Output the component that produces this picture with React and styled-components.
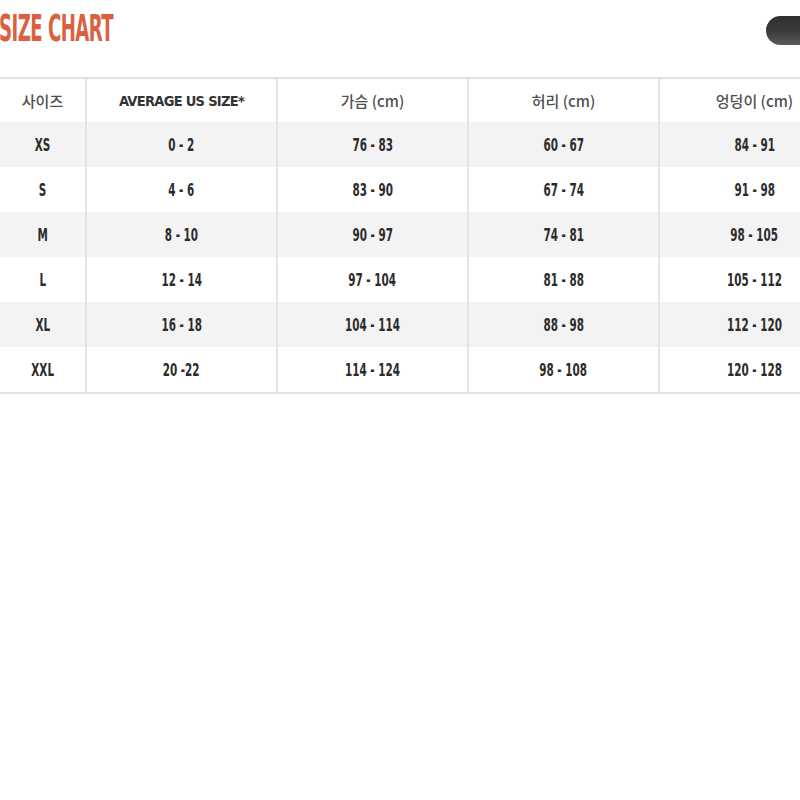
import React from 'react'
import styled, { createGlobalStyle } from 'styled-components';

const Global = createGlobalStyle`
html, body {
  margin: 0;
  padding: 0;
  background: #fff;
  overflow: hidden;
}
`;

const Page = styled.div`
width: 800px;
height: 800px;
overflow: hidden;
background: #fff;
`;

const TopBar = styled.div`
display: flex;
justify-content: space-between;
align-items: flex-start;
height: 77px;
`;

const Title = styled.h1`
margin: 8px 0 0 -1px;
font-family: "DejaVu Sans Condensed", "DejaVu Sans", sans-serif;
font-weight: bold;
font-size: 38px;
line-height: 40px;
color: #d8623f;
letter-spacing: -1px;
transform: scaleX(0.53);
transform-origin: left center;
white-space: nowrap;
`;

const Pill = styled.div`
margin-top: 16px;
width: 34px;
height: 29px;
border-radius: 15px 0 0 15px;
background: linear-gradient(180deg, #2e2e2e 0%, #3c3c3c 55%, #5a5a5a 100%);
`;

const Table = styled.div`
display: grid;
grid-template-columns: 85px 191px 191px 191px 191px;
width: 849px;
border-top: 2px solid #e2e2e2;
border-bottom: 2px solid #e2e2e2;
`;

const Row = styled.div`
display: contents;
`;

const Cell = styled.div`
height: ${p => p.$head ? 43 : 45}px;
display: flex;
align-items: center;
justify-content: center;
background: ${p => p.$shade ? '#f3f3f3' : '#fff'};
border-left: ${p => p.$first ? 'none' : '2px solid #e4e4e4'};
`;

const Num = styled.span`
display: inline-block;
font-family: "DejaVu Sans Condensed", "DejaVu Sans", sans-serif;
font-weight: bold;
font-size: 17px;
color: #2b2b2b;
transform: scaleX(0.68);
white-space: nowrap;
`;

const HeadKo = styled.span`
font-family: "Noto Sans CJK KR", "Noto Sans", sans-serif;
font-weight: 500;
font-size: 15px;
color: #505050;
white-space: nowrap;
`;

const HeadEn = styled.span`
display: inline-block;
font-family: "DejaVu Sans Condensed", "DejaVu Sans", sans-serif;
font-weight: bold;
font-size: 14.5px;
letter-spacing: -0.7px;
color: #333;
white-space: nowrap;
`;

const heads = ['사이즈', 'AVERAGE US SIZE*', '가슴 (cm)', '허리 (cm)', '엉덩이 (cm)'];

const rows = [
  ['XS', '0 - 2', '76 - 83', '60 - 67', '84 - 91'],
  ['S', '4 - 6', '83 - 90', '67 - 74', '91 - 98'],
  ['M', '8 - 10', '90 - 97', '74 - 81', '98 - 105'],
  ['L', '12 - 14', '97 - 104', '81 - 88', '105 - 112'],
  ['XL', '16 - 18', '104 - 114', '88 - 98', '112 - 120'],
  ['XXL', '20 -22', '114 - 124', '98 - 108', '120 - 128'],
];

const App = () => {
  return (
    <Page>
      <Global />
      <TopBar>
        <Title>SIZE CHART</Title>
        <Pill />
      </TopBar>
      <Table>
        <Row>
          {heads.map((h, i) => (
            <Cell key={h} $head $first={i === 0}>
              {i === 1 ? <HeadEn>{h}</HeadEn> : <HeadKo>{h}</HeadKo>}
            </Cell>
          ))}
        </Row>
        {rows.map((r, ri) => (
          <Row key={r[0]}>
            {r.map((v, i) => (
              <Cell key={i} $shade={ri % 2 === 0} $first={i === 0}>
                <Num>{v}</Num>
              </Cell>
            ))}
          </Row>
        ))}
      </Table>
    </Page>
  )
}

export default App
